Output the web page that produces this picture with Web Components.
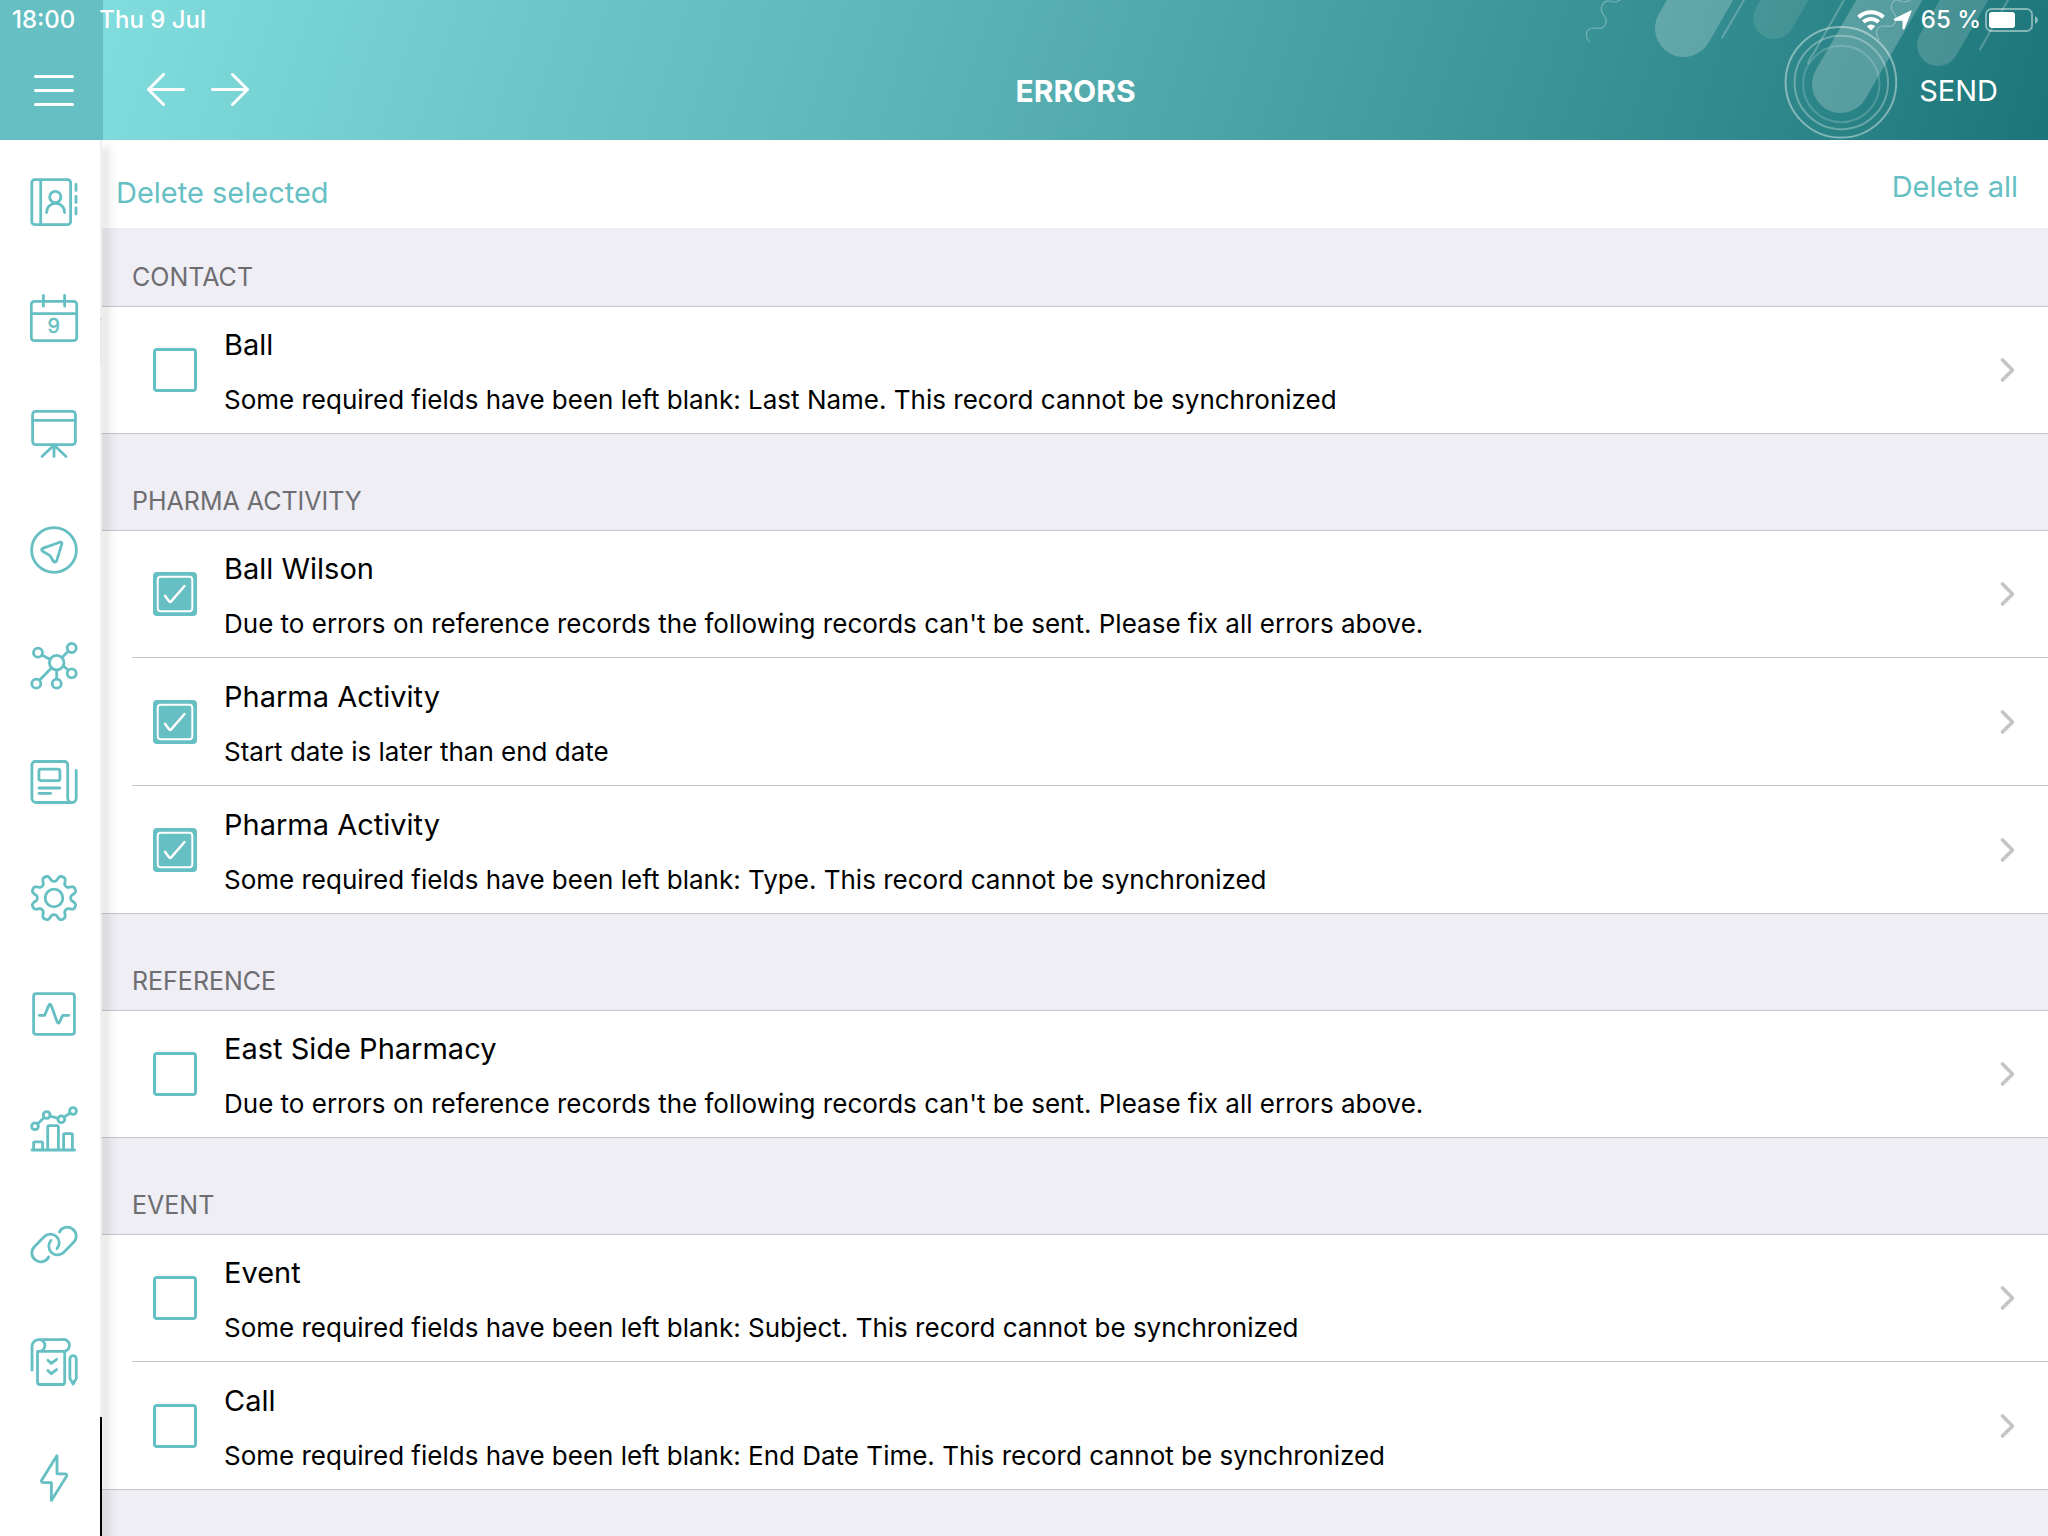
<!DOCTYPE html>
<html lang="en">
<head>
<meta charset="utf-8">
<meta name="viewport" content="width=device-width, initial-scale=1">
<title>Errors</title>
<style>
  :root { --teal: #65bfc3; --line: #c6c6ca; --canvas: #efeef4; --muted: #6d6d72; }
  html, body { margin: 0; min-height: 100%; }
  body { font-family: Inter, "Liberation Sans", sans-serif; color: #000; background: var(--canvas); }
</style>
</head>
<body>
<error-screen></error-screen>
<script>
const define = (name, html, setup) => {
  const template = document.createElement('template');
  template.innerHTML = html;
  customElements.define(name, class extends HTMLElement {
    constructor() {
      super();
      this.attachShadow({ mode: 'open' }).append(template.content.cloneNode(true));
    }
    connectedCallback() { if (setup) setup(this, this.shadowRoot); }
  });
};

const gearPath = () => {
  const points = [];
  for (let i = 0; i < 240; i++) {
    const a = i * Math.PI / 120;
    const r = 19.8 + 3.3 * Math.tanh(1.7 * Math.cos(8 * (a - Math.PI / 8)));
    points.push((24 + r * Math.cos(a)).toFixed(2) + ' ' + (24 + r * Math.sin(a)).toFixed(2));
  }
  return 'M' + points.join('L') + 'Z';
};

const ICONS = {
  contacts: '<rect x="1.8" y="1.6" width="38.8" height="45" rx="3"/><path d="M10.7 2V46.4"/><circle cx="25.3" cy="19" r="5.6"/><path d="M16.6 34.6C16.6 22.4 34.6 22.4 34.6 34.6M46 6.3V12.4M46 18.3V24.4M46 30V36"/>',
  calendar: '<rect x="1.3" y="7.3" width="45.4" height="39.4" rx="3"/><path d="M1.3 19.7H46.7M13.4 1.3V12.2M34.6 1.3V12.2"/><text x="23.7" y="39" text-anchor="middle">9</text>',
  board: '<rect x="2.6" y="1.4" width="42.8" height="33.2" rx="3"/><path d="M2.6 10.3H45.4M24 35V46.6M24 35L12 46.4M24 35L36 46.4"/>',
  compass: '<circle cx="24" cy="24" r="22.4"/><path d="M12.6 22.4L29.8 16.2Q32.4 15.6 31.8 18.2L26.6 34.8Q25.2 37.4 23.2 35L20 29.6L12.6 25.2Q10.6 23.6 12.6 22.4Z"/>',
  network: '<circle cx="26.7" cy="20.7" r="7.3"/><circle cx="8" cy="10.7" r="4.5"/><circle cx="41.7" cy="6" r="4.5"/><circle cx="41.7" cy="31.3" r="4.5"/><circle cx="26.7" cy="41.7" r="4.5"/><circle cx="6.3" cy="41.7" r="4.5"/><path d="M12 13.1L20.2 17.5M38.3 9.2L32 15.4M38.3 28.2L33.2 23.8M26.7 28.2V37M9.5 38.3L21.4 26"/>',
  news: '<path d="M37.7 40V6.7A3.2 3.2 0 0 0 34.5 3.5H5.1A3.2 3.2 0 0 0 1.9 6.7V40.3A4.2 4.2 0 0 0 6.1 44.5H42A4.2 4.2 0 0 0 46.2 40.3V12.5M37.7 40A4.3 4.3 0 0 0 42 44.5"/><rect x="8.9" y="11.1" width="21" height="11.6" rx="2"/><path d="M9 30H29.8M9 35.4H20.6"/>',
  settings: '<path d="' + gearPath() + '"/><circle cx="24" cy="24" r="8.8"/>',
  pulse: '<rect x="3.6" y="3.6" width="40.8" height="40.8" rx="2.6"/><path d="M9.2 25.3H14.7L18.8 15.4Q20 13 21.2 15.4L27.2 32Q28.3 34.4 29.6 32L32.7 25.3H38.8"/>',
  chart: '<circle cx="5" cy="20.3" r="3.4"/><circle cx="16.7" cy="9" r="3.4"/><circle cx="31.3" cy="13.3" r="3.4"/><circle cx="43" cy="5" r="3.4"/><path d="M7.5 17.9L14.2 11.4M20 10L28 12.4M34 11.2L40.2 7M2 44H44.6M3.6 44V37A1.2 1.2 0 0 1 4.8 35.8H11.4A1.2 1.2 0 0 1 12.6 37V44M17.7 44V20.8A1.2 1.2 0 0 1 18.9 19.6H27.2A1.2 1.2 0 0 1 28.4 20.8V44M33.6 44V28.8A1.2 1.2 0 0 1 34.8 27.6H41.2A1.2 1.2 0 0 1 42.4 28.8V44"/>',
  link: '<path d="M18.6 35A8.9 8.9 0 1 1 4.6 24.4L13.9 15A8.6 8.6 0 0 1 27 26.6M29.4 10A8.9 8.9 0 1 1 43.4 20.6L34.1 30A8.6 8.6 0 0 1 21 18.4"/>',
  survey: '<path d="M2 32V8.5A7 7 0 0 1 9 1.6H32A5.9 5.9 0 0 1 35 13.3M9 1.6A5.9 5.9 0 0 1 9 13.4H34.8M7.5 13.4V44A2.5 2.5 0 0 0 10 46.5H32.2A2.5 2.5 0 0 0 34.7 44V13.4M17.9 22.3L21.3 25.4L26.6 21.3M17.9 32.4L21.3 35.7L26.6 31.6M39.9 20.9A3.2 3.2 0 0 1 46.3 20.9V40.4L43.1 46L39.9 40.4Z"/>',
  bolt: '<path d="M27 1.6V19.8H35Q37.6 20.2 36.4 22.4L21.4 46.4V28.7H13Q10.6 28.2 11.8 26Z"/>'
};

define('app-icon', `
  <style>
    :host { display: block; width: 48px; height: 48px; }
    svg { display: block; width: 100%; height: 100%; overflow: visible; fill: none; stroke: var(--teal); stroke-width: 2.8; stroke-linecap: round; stroke-linejoin: round; }
    text { font-size: 20px; fill: var(--teal); stroke-width: 0.5; }
  </style>
  <svg viewBox="0 0 48 48" aria-hidden="true"></svg>`,
  (host, root) => { root.querySelector('svg').innerHTML = ICONS[host.getAttribute('name')]; });

define('side-link', `
  <style>
    :host { display: block; }
    a { display: grid; place-items: center; height: 116px; padding-left: 8px; }
  </style>
  <a><slot></slot></a>`,
  (host, root) => {
    const name = host.getAttribute('name');
    const a = root.querySelector('a');
    a.href = '#' + name;
    a.setAttribute('aria-label', name);
    const icon = document.createElement('app-icon');
    icon.setAttribute('name', name);
    host.replaceChildren(icon);
  });

define('side-bar', `
  <style>
    :host { display: flex; position: relative; z-index: 1; background: #fff; }
    nav { width: 100px; padding-top: 4px; box-sizing: border-box; }
    .edge { width: 2px; display: flex; flex-direction: column; background: #efefef; }
    .tab { margin-top: 178px; height: 45px; background: #e8e8e8; border-top: 2px solid #dcdcdc; box-sizing: border-box; }
    .bar { margin-top: auto; height: 119px; background: #000; }
    .shade { position: absolute; left: 100%; top: 0; bottom: 0; width: 16px; pointer-events: none;
      background: linear-gradient(90deg, rgba(0,0,0,.07), rgba(0,0,0,.08) 25%, rgba(0,0,0,.03) 60%, transparent);
      -webkit-mask: linear-gradient(transparent, #000 12px); mask: linear-gradient(transparent, #000 12px); }
  </style>
  <nav aria-label="Main"><slot></slot></nav>
  <div class="edge"><div class="tab"></div><div class="bar"></div></div>
  <div class="shade"></div>`);

define('status-bar', `
  <style>
    :host { display: flex; align-items: center; height: 40px; padding: 0 9px 0 12px; color: #fff; font-size: 24px; font-weight: 500; line-height: 40px; box-sizing: border-box; }
    .date { margin-left: 24px; }
    .right { margin-left: auto; display: flex; align-items: center; gap: 9px; }
    .power { display: flex; align-items: center; gap: 4px; }
    svg { display: block; }
  </style>
  <span>18:00</span><span class="date">Thu 9 Jul</span>
  <div class="right">
    <svg width="28" height="22" viewBox="0 0 28 22" aria-hidden="true"><g fill="none" stroke="#fff" stroke-width="4"><path d="M1.6 8.2A18 18 0 0 1 26.4 8.2"/><path d="M6.4 13A11.2 11.2 0 0 1 21.6 13"/></g><path d="M14 21.4L9.8 17.2A6.2 6.2 0 0 1 18.2 17.2Z" fill="#fff"/></svg>
    <svg width="18" height="20" viewBox="0 0 18 20" aria-hidden="true"><path d="M17 1L10 18.6Q9.4 19.4 9.1 18.4V10.2H.9Q-.2 9.8 .8 9.1Z" fill="#fff" stroke="#fff" stroke-width="1.2" stroke-linejoin="round"/></svg>
    <div class="power"><span>65 %</span>
    <svg width="54" height="24" viewBox="0 0 54 24" aria-hidden="true"><rect x="1" y="1" width="46" height="22" rx="5.5" fill="none" stroke="#fff" stroke-opacity=".45" stroke-width="2"/><rect x="4" y="4" width="26" height="16" rx="3" fill="#fff"/><path d="M50 8Q53 9.500 53 12T50 16Z" fill="#fff" fill-opacity=".5"/></svg></div>
  </div>`);

define('title-bar', `
  <style>
    :host { display: grid; grid-template: 40px 100px / 103px 1fr; position: relative; color: #fff; background: linear-gradient(108deg, #80dcdd 5%, #56aeb1 51%, #30898c 85%, #1c7578 100%); }
    .menu { grid-area: 1 / 1 / 3 / 2; background: var(--teal); }
    .art { grid-area: 1 / 2 / 3 / 3; justify-self: end; overflow: hidden; height: 140px; }
    status-bar { grid-area: 1 / 1 / 2 / 3; }
    .menu-button { grid-area: 2 / 1; justify-content: flex-start; padding-left: 33px; }
    .row { grid-area: 2 / 2; display: grid; grid-template-columns: 1fr auto 1fr; align-items: center; padding: 0 50px 0 42px; }
    .arrows { display: flex; gap: 22px; }
    button { display: flex; align-items: center; padding: 0; border: 0; background: none; color: inherit; font: inherit; }
    h1, .send { line-height: 40px; padding-top: 2px; }
    h1 { margin: 0; font-size: 30px; font-weight: 700; padding-left: 8px; }
    .send { justify-self: end; font-size: 29px; }
    svg { display: block; fill: none; stroke: #fff; stroke-width: 3; stroke-linecap: round; stroke-linejoin: round; }
  </style>
  <div class="menu"></div>
  <svg class="art" width="488" height="140" viewBox="0 0 488 140" aria-hidden="true">
    <g stroke-opacity=".22"><path stroke-width="57.400" d="M123.700 28.300l60-104"/><path stroke-width="57.400" d="M280.700 84.300l100-173.200"/></g>
    <path stroke-width="41.400" stroke-opacity=".1" d="M214 18.300l60-104"/>
    <path stroke-width="42" stroke-opacity=".16" d="M378 45l60-104"/>
    <g stroke-width="2" stroke-opacity=".24"><path d="M162.300 37.300L184 0M284 0L255 51Q250 58 248 63M448 0L420 49.500"/></g>
    <g stroke-width="1.200" stroke-opacity=".3"><path d="M29 41.500C25 36 25 29 33 28C38 28 42 30 45 25C49 18 42 15 41.500 11C40 4 46 0 50 1C54 3 57 2 60 0"/><path transform="translate(290 -2)" d="M29 41.500C25 36 25 29 33 28C38 28 42 30 45 25C49 18 42 15 41.500 11C40 4 46 0 50 3C54 5 57 4 60 2"/></g>
    <g stroke-width="2"><circle cx="280.900" cy="82.300" r="55.300" stroke-opacity=".42"/><circle cx="281.300" cy="82.500" r="46.700" stroke-opacity=".3"/><circle cx="281.300" cy="84" r="38.200" stroke-opacity=".18"/></g>
  </svg>
  <status-bar></status-bar>
  <button class="menu-button" aria-label="Menu"><svg width="42" height="32" viewBox="0 0 42 32"><path d="M2.500 2.500H39.500M2.500 16.500H39.500M2.500 30.500H39.500"/></svg></button>
  <div class="row">
    <div class="arrows">
      <button aria-label="Back"><svg width="42" height="34" viewBox="0 0 42 34"><path d="M18.500 1.500L3.500 16.500L18.500 31.500M3.500 16.500H38.500"/></svg></button>
      <button aria-label="Forward"><svg width="42" height="34" viewBox="0 0 42 34"><path d="M23.500 1.500L38.500 16.500L23.500 31.500M38.500 16.500H3.500"/></svg></button>
    </div>
    <h1>ERRORS</h1>
    <button class="send">SEND</button>
  </div>`);

define('action-bar', `
  <style>
    :host { display: flex; justify-content: space-between; align-items: flex-start; height: 88px; padding: 0 30px 0 14px; background: #fff; box-sizing: border-box; }
    button { margin: 0; padding: 0; border: 0; background: none; color: var(--teal); font: inherit; font-size: 29px; line-height: 36px; }
    .selected { margin-top: 35px; }
    .all { margin-top: 29px; }
  </style>
  <button class="selected">Delete selected</button>
  <button class="all">Delete all</button>`);

define('error-group', `
  <style>
    :host { display: block; }
    h2 { display: flex; align-items: flex-end; height: 96px; margin: 0; padding: 0 30px 11px; box-sizing: border-box; font-size: 25px; line-height: 36px; font-weight: 400; color: var(--muted); }
    :host([lead]) h2 { height: 78px; }
    .list { background: #fff; border: solid var(--line); border-width: 1px 0; }
    ::slotted(:first-child) { margin-top: -1px; }
    ::slotted(:last-child) { margin-bottom: -1px; }
  </style>
  <h2></h2>
  <div class="list"><slot></slot></div>`,
  (host, root) => { root.querySelector('h2').textContent = host.getAttribute('heading'); });

define('error-row', `
  <style>
    :host { display: block; padding-left: 30px; }
    .row { display: flex; align-items: center; gap: 27px; padding: 0 31px 0 21px; border-bottom: 1px solid var(--line); }
    .box { display: grid; width: 44px; height: 44px; }
    .box > * { grid-area: 1 / 1; }
    input { appearance: none; margin: 0; width: 44px; height: 44px; border: 3px solid var(--teal); border-radius: 4px; background: #fff; box-sizing: border-box; }
    input:checked { background: var(--teal); }
    .tick { visibility: hidden; pointer-events: none; stroke: #fff; }
    input:checked + .tick { visibility: visible; }
    .text { flex: 1; padding: 21px 0 15px; }
    label { display: block; width: fit-content; font-size: 29px; line-height: 36px; }
    p { margin: 19px 0 0; font-size: 26px; line-height: 36px; }
    button { padding: 0; border: 0; background: none; }
    svg { display: block; fill: none; stroke-linecap: round; stroke-linejoin: round; }
  </style>
  <div class="row">
    <div class="box"><input type="checkbox" id="pick"><svg class="tick" width="44" height="44" viewBox="0 0 44 44" aria-hidden="true"><rect x="4.700" y="4.700" width="34.600" height="34.600" rx="3" stroke-width="2"/><path stroke-width="2.500" d="M12 23.800L16.200 29.400Q17.200 30.600 18.200 29.400L31.500 14"/></svg></div>
    <div class="text"><label for="pick"></label><p><slot></slot></p></div>
    <button aria-label="Open"><svg width="18" height="28" viewBox="0 0 18 28"><path stroke="#c4c4c7" stroke-width="3.600" d="M3.500 4L13.500 14L3.500 24"/></svg></button>
  </div>`,
  (host, root) => {
    root.querySelector('label').textContent = host.getAttribute('name');
    root.querySelector('input').checked = host.hasAttribute('checked');
  });

define('error-screen', `
  <style>
    :host { display: flex; flex-direction: column; min-height: 100vh; }
    .body { display: flex; flex: 1; }
    main { flex: 1; background: var(--canvas); }
  </style>
  <title-bar></title-bar>
  <div class="body">
    <side-bar>
      <side-link name="contacts"></side-link><side-link name="calendar"></side-link><side-link name="board"></side-link>
      <side-link name="compass"></side-link><side-link name="network"></side-link><side-link name="news"></side-link>
      <side-link name="settings"></side-link><side-link name="pulse"></side-link><side-link name="chart"></side-link>
      <side-link name="link"></side-link><side-link name="survey"></side-link><side-link name="bolt"></side-link>
    </side-bar>
    <main>
      <action-bar></action-bar>
      <error-group lead heading="CONTACT">
        <error-row name="Ball">Some required fields have been left blank: Last Name. This record cannot be synchronized</error-row>
      </error-group>
      <error-group heading="PHARMA ACTIVITY">
        <error-row checked name="Ball Wilson">Due to errors on reference records the following records can't be sent. Please fix all errors above.</error-row>
        <error-row checked name="Pharma Activity">Start date is later than end date</error-row>
        <error-row checked name="Pharma Activity">Some required fields have been left blank: Type. This record cannot be synchronized</error-row>
      </error-group>
      <error-group heading="REFERENCE">
        <error-row name="East Side Pharmacy">Due to errors on reference records the following records can't be sent. Please fix all errors above.</error-row>
      </error-group>
      <error-group heading="EVENT">
        <error-row name="Event">Some required fields have been left blank: Subject. This record cannot be synchronized</error-row>
        <error-row name="Call">Some required fields have been left blank: End Date Time. This record cannot be synchronized</error-row>
      </error-group>
    </main>
  </div>`);
</script>
</body>
</html>
